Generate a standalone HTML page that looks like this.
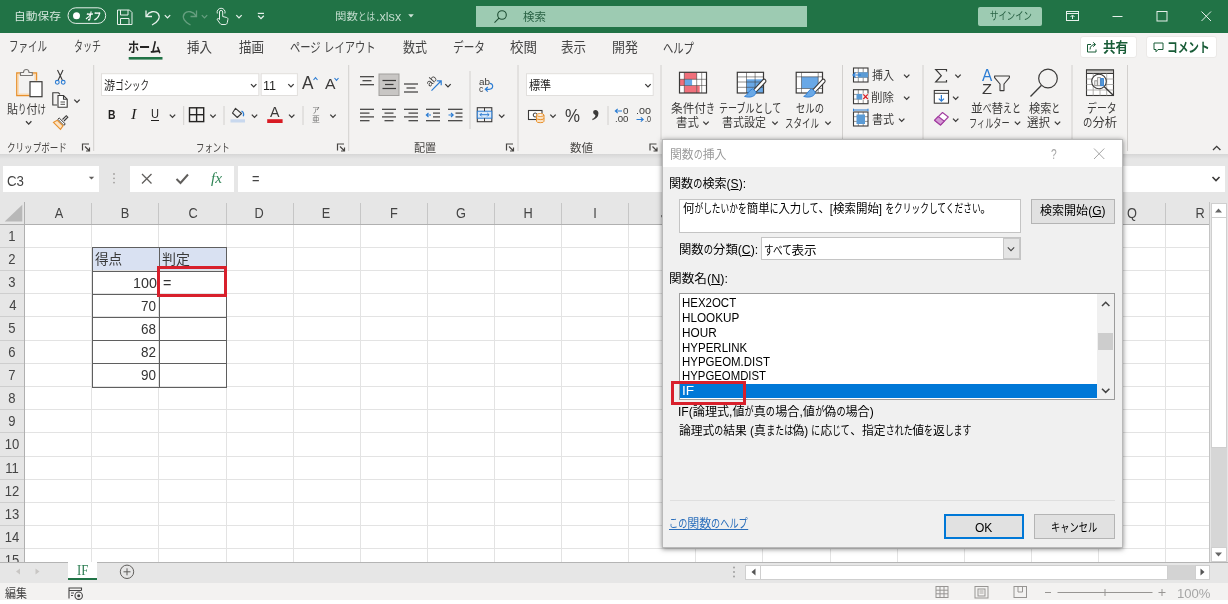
<!DOCTYPE html>
<html lang="ja"><head><meta charset="utf-8"><title>関数とは.xlsx - Excel</title>
<style>
*{box-sizing:border-box;margin:0;padding:0}
html,body{width:1228px;height:604px;overflow:hidden;background:#fff}
body{position:relative;will-change:transform;font-family:"Liberation Sans","Noto Sans CJK JP",sans-serif;color:#262626}
.a{position:absolute}
.t{position:absolute;white-space:nowrap;transform-origin:0 50%;line-height:1}
svg{position:absolute;overflow:visible}
.k{display:inline-block;transform:scaleX(.76);transform-origin:0 50%}
.cj{font-family:"Noto Sans CJK JP","Liberation Sans",sans-serif}
</style></head>
<body>
<div class="a" style="left:0.0px;top:0.0px;width:1228.0px;height:32.5px;background:#217346;"></div>
<div class="a" style="left:0.0px;top:32.5px;width:1228.0px;height:121.0px;background:#f3f2f1;"></div>
<div class="a" style="left:0.0px;top:153.5px;width:1228.0px;height:5.5px;background:linear-gradient(#d6d6d6,#e6e6e6)"></div>
<div class="a" style="left:0.0px;top:159.0px;width:1228.0px;height:42.5px;background:#e6e6e6;"></div>
<div class="a" style="left:2.5px;top:165.5px;width:96.5px;height:26.0px;background:#fff;"></div>
<div class="a" style="left:129.5px;top:165.5px;width:104.5px;height:26.0px;background:#fff;"></div>
<div class="a" style="left:237.5px;top:165.5px;width:987.0px;height:26.0px;background:#fff;"></div>
<div class="a" style="left:476.0px;top:6.0px;width:331.0px;height:21.0px;background:#9dcbb2;"></div>
<div class="a" style="left:977.5px;top:6.5px;width:64.0px;height:19.0px;background:#9dcbb2;border-radius:2px;"></div>
<div class="a" style="left:1079.5px;top:36.0px;width:57.5px;height:22.0px;background:#fff;border:1px solid #ebe9e7;border-radius:3px;"></div>
<div class="a" style="left:1145.5px;top:36.0px;width:71.5px;height:22.0px;background:#fff;border:1px solid #ebe9e7;border-radius:3px;"></div>
<div class="a" style="left:0.0px;top:201.5px;width:1210.0px;height:361.0px;background:#fff;"></div>
<div class="a" style="left:0.0px;top:201.5px;width:1210.0px;height:22.5px;background:#e6e6e6;"></div>
<div class="a" style="left:0.0px;top:201.5px;width:24.6px;height:361.0px;background:#e6e6e6;"></div>
<svg class="a" style="left:0;top:0" width="1228" height="604" shape-rendering="crispEdges">
<line x1="24.6" y1="224.0" x2="24.6" y2="562.5" stroke="#e3e3e3" stroke-width="1"/>
<line x1="24.6" y1="202.5" x2="24.6" y2="224.0" stroke="#c6c6c6" stroke-width="1"/>
<line x1="91.7" y1="224.0" x2="91.7" y2="562.5" stroke="#e3e3e3" stroke-width="1"/>
<line x1="91.7" y1="202.5" x2="91.7" y2="224.0" stroke="#c6c6c6" stroke-width="1"/>
<line x1="158.8" y1="224.0" x2="158.8" y2="562.5" stroke="#e3e3e3" stroke-width="1"/>
<line x1="158.8" y1="202.5" x2="158.8" y2="224.0" stroke="#c6c6c6" stroke-width="1"/>
<line x1="226.0" y1="224.0" x2="226.0" y2="562.5" stroke="#e3e3e3" stroke-width="1"/>
<line x1="226.0" y1="202.5" x2="226.0" y2="224.0" stroke="#c6c6c6" stroke-width="1"/>
<line x1="293.1" y1="224.0" x2="293.1" y2="562.5" stroke="#e3e3e3" stroke-width="1"/>
<line x1="293.1" y1="202.5" x2="293.1" y2="224.0" stroke="#c6c6c6" stroke-width="1"/>
<line x1="360.2" y1="224.0" x2="360.2" y2="562.5" stroke="#e3e3e3" stroke-width="1"/>
<line x1="360.2" y1="202.5" x2="360.2" y2="224.0" stroke="#c6c6c6" stroke-width="1"/>
<line x1="427.3" y1="224.0" x2="427.3" y2="562.5" stroke="#e3e3e3" stroke-width="1"/>
<line x1="427.3" y1="202.5" x2="427.3" y2="224.0" stroke="#c6c6c6" stroke-width="1"/>
<line x1="494.4" y1="224.0" x2="494.4" y2="562.5" stroke="#e3e3e3" stroke-width="1"/>
<line x1="494.4" y1="202.5" x2="494.4" y2="224.0" stroke="#c6c6c6" stroke-width="1"/>
<line x1="561.6" y1="224.0" x2="561.6" y2="562.5" stroke="#e3e3e3" stroke-width="1"/>
<line x1="561.6" y1="202.5" x2="561.6" y2="224.0" stroke="#c6c6c6" stroke-width="1"/>
<line x1="628.7" y1="224.0" x2="628.7" y2="562.5" stroke="#e3e3e3" stroke-width="1"/>
<line x1="628.7" y1="202.5" x2="628.7" y2="224.0" stroke="#c6c6c6" stroke-width="1"/>
<line x1="695.8" y1="224.0" x2="695.8" y2="562.5" stroke="#e3e3e3" stroke-width="1"/>
<line x1="695.8" y1="202.5" x2="695.8" y2="224.0" stroke="#c6c6c6" stroke-width="1"/>
<line x1="762.9" y1="224.0" x2="762.9" y2="562.5" stroke="#e3e3e3" stroke-width="1"/>
<line x1="762.9" y1="202.5" x2="762.9" y2="224.0" stroke="#c6c6c6" stroke-width="1"/>
<line x1="830.0" y1="224.0" x2="830.0" y2="562.5" stroke="#e3e3e3" stroke-width="1"/>
<line x1="830.0" y1="202.5" x2="830.0" y2="224.0" stroke="#c6c6c6" stroke-width="1"/>
<line x1="897.2" y1="224.0" x2="897.2" y2="562.5" stroke="#e3e3e3" stroke-width="1"/>
<line x1="897.2" y1="202.5" x2="897.2" y2="224.0" stroke="#c6c6c6" stroke-width="1"/>
<line x1="964.3" y1="224.0" x2="964.3" y2="562.5" stroke="#e3e3e3" stroke-width="1"/>
<line x1="964.3" y1="202.5" x2="964.3" y2="224.0" stroke="#c6c6c6" stroke-width="1"/>
<line x1="1031.4" y1="224.0" x2="1031.4" y2="562.5" stroke="#e3e3e3" stroke-width="1"/>
<line x1="1031.4" y1="202.5" x2="1031.4" y2="224.0" stroke="#c6c6c6" stroke-width="1"/>
<line x1="1098.5" y1="224.0" x2="1098.5" y2="562.5" stroke="#e3e3e3" stroke-width="1"/>
<line x1="1098.5" y1="202.5" x2="1098.5" y2="224.0" stroke="#c6c6c6" stroke-width="1"/>
<line x1="1165.6" y1="224.0" x2="1165.6" y2="562.5" stroke="#e3e3e3" stroke-width="1"/>
<line x1="1165.6" y1="202.5" x2="1165.6" y2="224.0" stroke="#c6c6c6" stroke-width="1"/>
<line x1="24.6" y1="224.0" x2="1209.5" y2="224.0" stroke="#e3e3e3" stroke-width="1"/>
<line x1="0" y1="224.0" x2="24.6" y2="224.0" stroke="#cecece" stroke-width="1"/>
<line x1="24.6" y1="247.2" x2="1209.5" y2="247.2" stroke="#e3e3e3" stroke-width="1"/>
<line x1="0" y1="247.2" x2="24.6" y2="247.2" stroke="#cecece" stroke-width="1"/>
<line x1="24.6" y1="270.4" x2="1209.5" y2="270.4" stroke="#e3e3e3" stroke-width="1"/>
<line x1="0" y1="270.4" x2="24.6" y2="270.4" stroke="#cecece" stroke-width="1"/>
<line x1="24.6" y1="293.6" x2="1209.5" y2="293.6" stroke="#e3e3e3" stroke-width="1"/>
<line x1="0" y1="293.6" x2="24.6" y2="293.6" stroke="#cecece" stroke-width="1"/>
<line x1="24.6" y1="316.8" x2="1209.5" y2="316.8" stroke="#e3e3e3" stroke-width="1"/>
<line x1="0" y1="316.8" x2="24.6" y2="316.8" stroke="#cecece" stroke-width="1"/>
<line x1="24.6" y1="340.0" x2="1209.5" y2="340.0" stroke="#e3e3e3" stroke-width="1"/>
<line x1="0" y1="340.0" x2="24.6" y2="340.0" stroke="#cecece" stroke-width="1"/>
<line x1="24.6" y1="363.2" x2="1209.5" y2="363.2" stroke="#e3e3e3" stroke-width="1"/>
<line x1="0" y1="363.2" x2="24.6" y2="363.2" stroke="#cecece" stroke-width="1"/>
<line x1="24.6" y1="386.4" x2="1209.5" y2="386.4" stroke="#e3e3e3" stroke-width="1"/>
<line x1="0" y1="386.4" x2="24.6" y2="386.4" stroke="#cecece" stroke-width="1"/>
<line x1="24.6" y1="409.6" x2="1209.5" y2="409.6" stroke="#e3e3e3" stroke-width="1"/>
<line x1="0" y1="409.6" x2="24.6" y2="409.6" stroke="#cecece" stroke-width="1"/>
<line x1="24.6" y1="432.8" x2="1209.5" y2="432.8" stroke="#e3e3e3" stroke-width="1"/>
<line x1="0" y1="432.8" x2="24.6" y2="432.8" stroke="#cecece" stroke-width="1"/>
<line x1="24.6" y1="456.0" x2="1209.5" y2="456.0" stroke="#e3e3e3" stroke-width="1"/>
<line x1="0" y1="456.0" x2="24.6" y2="456.0" stroke="#cecece" stroke-width="1"/>
<line x1="24.6" y1="479.2" x2="1209.5" y2="479.2" stroke="#e3e3e3" stroke-width="1"/>
<line x1="0" y1="479.2" x2="24.6" y2="479.2" stroke="#cecece" stroke-width="1"/>
<line x1="24.6" y1="502.4" x2="1209.5" y2="502.4" stroke="#e3e3e3" stroke-width="1"/>
<line x1="0" y1="502.4" x2="24.6" y2="502.4" stroke="#cecece" stroke-width="1"/>
<line x1="24.6" y1="525.6" x2="1209.5" y2="525.6" stroke="#e3e3e3" stroke-width="1"/>
<line x1="0" y1="525.6" x2="24.6" y2="525.6" stroke="#cecece" stroke-width="1"/>
<line x1="24.6" y1="548.8" x2="1209.5" y2="548.8" stroke="#e3e3e3" stroke-width="1"/>
<line x1="0" y1="548.8" x2="24.6" y2="548.8" stroke="#cecece" stroke-width="1"/>
<line x1="0" y1="224.0" x2="1209.5" y2="224.0" stroke="#b0b0b0" stroke-width="1"/>
<line x1="24.6" y1="201.5" x2="24.6" y2="562.5" stroke="#b0b0b0" stroke-width="1"/>
<line x1="1209.5" y1="201.5" x2="1209.5" y2="562" stroke="#c4c4c4" stroke-width="1"/>
<polygon points="22.3,204.8 22.3,221.5 4.7,221.5" fill="#b8b8b8" shape-rendering="auto"/>
</svg>
<div class="a" style="left:91.7px;top:247.2px;width:134.2px;height:23.2px;background:#d9e1f2;"></div>
<svg class="a" style="left:0;top:0" width="1228" height="604" shape-rendering="crispEdges">
<line x1="92.4" y1="247.9" x2="226.7" y2="247.9" stroke="#5f5f5f" stroke-width="1"/>
<line x1="92.4" y1="271.1" x2="226.7" y2="271.1" stroke="#5f5f5f" stroke-width="1"/>
<line x1="92.4" y1="294.3" x2="226.7" y2="294.3" stroke="#5f5f5f" stroke-width="1"/>
<line x1="92.4" y1="317.5" x2="226.7" y2="317.5" stroke="#5f5f5f" stroke-width="1"/>
<line x1="92.4" y1="340.7" x2="226.7" y2="340.7" stroke="#5f5f5f" stroke-width="1"/>
<line x1="92.4" y1="363.9" x2="226.7" y2="363.9" stroke="#5f5f5f" stroke-width="1"/>
<line x1="92.4" y1="387.1" x2="226.7" y2="387.1" stroke="#5f5f5f" stroke-width="1"/>
<line x1="92.4" y1="247.9" x2="92.4" y2="387.1" stroke="#5f5f5f" stroke-width="1"/>
<line x1="159.5" y1="247.9" x2="159.5" y2="387.1" stroke="#5f5f5f" stroke-width="1"/>
<line x1="226.7" y1="247.9" x2="226.7" y2="387.1" stroke="#5f5f5f" stroke-width="1"/>
</svg>
<div class="a" style="left:157.0px;top:266.0px;width:70.0px;height:31.0px;border:3px solid #d8202c;"></div>
<svg style="left:0;top:0" width="1228" height="604" viewBox="0 0 1228 604">
<rect x="68" y="7.8" width="37.7" height="15.6" rx="7.8" fill="none" stroke="#e6f0ea" stroke-width="1"/>
<circle cx="76.5" cy="15.7" r="3.5" fill="#fff"/>
<path d="M117.5,10 H129.5 L132,12.5 V24.5 H117.5 Z M120.5,10 V15 H128 V10 M120.5,24.5 V18.5 H129 V24.5" fill="none" stroke="#e6f0ea" stroke-width="1"/>
<path d="M146,10.5 V16.5 H152 M146.5,16 C149,11.5 155,10 158,13.5 C161,17.5 158,22 152,25" fill="none" stroke="#e6f0ea" stroke-width="1.3"/>
<polyline points="164.8,15.1 167.5,17.9 170.2,15.1" fill="none" stroke="#e6f0ea" stroke-width="1.3"/>
<g opacity=".35"><path d="M196.5,10.5 V16.5 H190.5 M196,16 C193.5,11.5 187.5,10 184.5,13.5 C181.5,17.5 184.5,22 190.5,25" fill="none" stroke="#e6f0ea" stroke-width="1.3"/><polyline points="201.8,15.1 204.5,17.9 207.2,15.1" fill="none" stroke="#e6f0ea" stroke-width="1.3"/></g>
<path d="M219.5,18 V12 a1.6,1.6 0 0 1 3.2,0 V16.5 l4,1 c1,.3 1.3,1 1.2,2 l-.6,3 c-.3,1.5 -1,2 -2.3,2 h-3 c-1,0 -1.6,-.4 -2.2,-1.3 l-2.8,-4 c1,-1 2,-.6 2.5,.3 z" fill="none" stroke="#e6f0ea" stroke-width="1"/>
<path d="M217.3,13.5 a4,4 0 1 1 7.6,0" fill="none" stroke="#e6f0ea" stroke-width="1"/>
<polyline points="236.3,15.1 239.0,17.9 241.7,15.1" fill="none" stroke="#e6f0ea" stroke-width="1.3"/>
<line x1="257.8" y1="13.4" x2="264" y2="13.4" stroke="#e6f0ea" stroke-width="1.2"/>
<polyline points="258.2,15.8 261.0,18.6 263.8,15.8" fill="none" stroke="#e6f0ea" stroke-width="1.3"/>
<polygon points="408.2,14.3 413.8,14.3 411,17.6" fill="#cfe3d8"/>
<circle cx="502" cy="15" r="4.3" fill="none" stroke="#1e4d33" stroke-width="1.1"/><line x1="499" y1="18.2" x2="494.5" y2="22.7" stroke="#1e4d33" stroke-width="1.1"/>
<rect x="1066.5" y="11.5" width="12" height="9" fill="none" stroke="#e6f0ea" stroke-width="1"/><line x1="1066.5" y1="13.5" x2="1078.5" y2="13.5" stroke="#e6f0ea"/><path d="M1072.5,19 V15.5 M1070.5,17 L1072.5,15 L1074.5,17" fill="none" stroke="#e6f0ea" stroke-width="1"/>
<line x1="1112.5" y1="16.5" x2="1122.5" y2="16.5" stroke="#e6f0ea" stroke-width="1"/>
<rect x="1157" y="11.5" width="10" height="9.5" fill="none" stroke="#e6f0ea" stroke-width="1"/>
<path d="M1201.5,11.5 L1211,21 M1211,11.5 L1201.5,21" stroke="#e6f0ea" stroke-width="1" fill="none"/>
<rect x="128.7" y="57" width="33.8" height="2.6" fill="#217346"/>
<path d="M1091,44.5 H1087.5 V52 H1096 V49.5 M1090,49.5 C1090,46 1092.5,44.5 1095,44.5 M1093.2,42.3 L1095.6,44.5 L1093.2,46.7" fill="none" stroke="#185c37" stroke-width="1"/>
<path d="M1154,43 H1163 V49.5 H1158 L1156,51.8 V49.5 H1154 Z" fill="none" stroke="#185c37" stroke-width="1"/>
<polyline points="1213,150 1216.7,146.3 1220.4,150" fill="none" stroke="#3b3a39" stroke-width="1.3"/>
<path d="M21,73 H16.8 V95.5 H29.5 M32,73 H36.5 V80.5" fill="none" stroke="#e8912d" stroke-width="1.4"/>
<path d="M20.5,74.4 H18.2 V94.1 H29.3 M32.5,74.4 H35.1 V80.5" fill="none" stroke="#fbd9b0" stroke-width="1.3"/>
<path d="M20.5,75.5 V72.5 H23.5 C23.5,68.5 29,68.5 29,72.5 H32.3 V75.5 Z" fill="#f3f2f1" stroke="#797775" stroke-width="1.1"/>
<rect x="30" y="81.7" width="12" height="15" fill="#fff" stroke="#3b3a39" stroke-width="1.2"/>
<polyline points="26.0,121.3 28.7,124.1 31.4,121.3" fill="none" stroke="#3b3a39" stroke-width="1.3"/>
<path d="M57.5,70 L62.3,80 M63,70 L58.2,80" stroke="#3b3a39" stroke-width="1.1" fill="none"/>
<circle cx="57.3" cy="82.3" r="1.9" fill="none" stroke="#2b7cd3" stroke-width="1.1"/><circle cx="63.2" cy="82.3" r="1.9" fill="none" stroke="#2b7cd3" stroke-width="1.1"/>
<path d="M57,105 H52.8 V92.8 H58.5 L60,94.3" fill="none" stroke="#3b3a39" stroke-width="1.1"/>
<path d="M58,95.5 H63.5 L67.2,99.2 V107.3 H58 Z M63.5,95.5 V99.2 H67.2" fill="#fff" stroke="#3b3a39" stroke-width="1.1"/>
<line x1="60.5" y1="102" x2="65" y2="102" stroke="#3b3a39" stroke-width="0.9"/>
<line x1="60.5" y1="104.3" x2="65" y2="104.3" stroke="#3b3a39" stroke-width="0.9"/>
<polyline points="74.3,99.6 77.0,102.4 79.7,99.6" fill="none" stroke="#3b3a39" stroke-width="1.3"/>
<path d="M62.5,119.5 L66.3,115.7 L67.8,117.2 L64,121" fill="none" stroke="#3b3a39" stroke-width="1.1"/>
<path d="M59.2,118 L65.3,124 L63.8,125.3 L57.8,119.3 Z" fill="#fff" stroke="#3b3a39" stroke-width="1"/>
<path d="M57.3,120.3 L53.5,122.3 L60.5,129.3 L63,125.8 Z" fill="#fbe3c5" stroke="#e8912d" stroke-width="1.1"/>
<path d="M82.5,150.5 V144 H89.0" fill="none" stroke="#484644" stroke-width="1.2"/><path d="M85.0,146.5 L89.5,151 M89.5,147.5 V151 H86.0" fill="none" stroke="#484644" stroke-width="1.2"/>
<line x1="93.7" y1="65" x2="93.7" y2="151" stroke="#d2d0ce" stroke-width="1"/>
<rect x="101.5" y="73.7" width="157.3" height="21.8" fill="#fff" stroke="#e1dfdd" stroke-width="1"/>
<rect x="261.2" y="73.7" width="36.2" height="21.8" fill="#fff" stroke="#e1dfdd" stroke-width="1"/>
<polyline points="251.0,84.1 253.7,86.9 256.4,84.1" fill="none" stroke="#3b3a39" stroke-width="1.3"/>
<polyline points="288.3,84.1 291.0,86.9 293.7,84.1" fill="none" stroke="#3b3a39" stroke-width="1.3"/>
<polyline points="313.5,80 315.5,77.7 317.5,80" fill="none" stroke="#2b7cd3" stroke-width="1.1"/>
<polyline points="334.5,78 336.5,80.3 338.5,78" fill="none" stroke="#2b7cd3" stroke-width="1.1"/>
<polyline points="169.8,114.6 172.5,117.4 175.2,114.6" fill="none" stroke="#3b3a39" stroke-width="1.3"/>
<line x1="183.7" y1="106" x2="183.7" y2="125" stroke="#d2d0ce" stroke-width="1"/>
<rect x="189.5" y="107.8" width="14.2" height="13.8" fill="none" stroke="#252423" stroke-width="1.4"/><line x1="196.6" y1="107.8" x2="196.6" y2="121.6" stroke="#252423" stroke-width="1.4"/><line x1="189.5" y1="114.7" x2="203.7" y2="114.7" stroke="#252423" stroke-width="1.4"/>
<polyline points="210.3,114.6 213.0,117.4 215.7,114.6" fill="none" stroke="#3b3a39" stroke-width="1.3"/>
<line x1="224" y1="106" x2="224" y2="125" stroke="#d2d0ce" stroke-width="1"/>
<path d="M235.5,108.3 L241.5,113.5 L237.3,117.5 L232.5,113 Z" fill="none" stroke="#3b3a39" stroke-width="1.1" stroke-linejoin="round"/>
<path d="M241.5,111 C243.5,112 244,114 243.3,116.3" fill="none" stroke="#2b7cd3" stroke-width="1.3"/>
<rect x="230.5" y="119.3" width="14.5" height="3.2" fill="#c8d8ee"/>
<polyline points="251.8,114.6 254.5,117.4 257.2,114.6" fill="none" stroke="#3b3a39" stroke-width="1.3"/>
<rect x="267.2" y="119.2" width="15.4" height="3.8" fill="#d81b23"/>
<polyline points="289.0,114.6 291.7,117.4 294.4,114.6" fill="none" stroke="#3b3a39" stroke-width="1.3"/>
<line x1="303" y1="106" x2="303" y2="125" stroke="#d2d0ce" stroke-width="1"/>
<polyline points="330.3,114.6 333.0,117.4 335.7,114.6" fill="none" stroke="#3b3a39" stroke-width="1.3"/>
<path d="M337.5,150.5 V144 H344.0" fill="none" stroke="#484644" stroke-width="1.2"/><path d="M340.0,146.5 L344.5,151 M344.5,147.5 V151 H341.0" fill="none" stroke="#484644" stroke-width="1.2"/>
<line x1="348.7" y1="65" x2="348.7" y2="151" stroke="#d2d0ce" stroke-width="1"/>
<line x1="360" y1="76.7" x2="374" y2="76.7" stroke="#3b3a39" stroke-width="1.2"/><line x1="362.5" y1="80.7" x2="371.5" y2="80.7" stroke="#3b3a39" stroke-width="1.2"/><line x1="360" y1="84.7" x2="374" y2="84.7" stroke="#3b3a39" stroke-width="1.2"/>
<rect x="379" y="74" width="20" height="21.5" fill="#c8c6c4" stroke="#a19f9d" stroke-width="1"/>
<line x1="382.5" y1="80.5" x2="396" y2="80.5" stroke="#3b3a39" stroke-width="1.2"/><line x1="385" y1="84.5" x2="393.5" y2="84.5" stroke="#3b3a39" stroke-width="1.2"/><line x1="382.5" y1="88.5" x2="396" y2="88.5" stroke="#3b3a39" stroke-width="1.2"/>
<line x1="404" y1="84" x2="418" y2="84" stroke="#3b3a39" stroke-width="1.2"/><line x1="406.5" y1="88" x2="415.5" y2="88" stroke="#3b3a39" stroke-width="1.2"/><line x1="404" y1="92" x2="418" y2="92" stroke="#3b3a39" stroke-width="1.2"/>
<path d="M431.5,90.7 L441,81 M436.8,80.8 H441.2 V85.2" fill="none" stroke="#2b7cd3" stroke-width="1.2"/>
<polyline points="445.3,84.1 448.0,86.9 450.7,84.1" fill="none" stroke="#3b3a39" stroke-width="1.3"/>
<line x1="470" y1="71" x2="470" y2="129" stroke="#d2d0ce" stroke-width="1"/>
<path d="M489.5,83.3 C493.8,83.3 493.8,89.3 489,89.3 H485.5 M487.8,87 L485.3,89.3 L487.8,91.6" fill="none" stroke="#2b7cd3" stroke-width="1.2"/>
<line x1="360" y1="109.3" x2="374" y2="109.3" stroke="#3b3a39" stroke-width="1.2"/><line x1="360" y1="113.1" x2="369.5" y2="113.1" stroke="#3b3a39" stroke-width="1.2"/><line x1="360" y1="116.9" x2="374" y2="116.9" stroke="#3b3a39" stroke-width="1.2"/><line x1="360" y1="120.7" x2="369.5" y2="120.7" stroke="#3b3a39" stroke-width="1.2"/>
<line x1="382" y1="109.3" x2="396" y2="109.3" stroke="#3b3a39" stroke-width="1.2"/><line x1="384.5" y1="113.1" x2="393.5" y2="113.1" stroke="#3b3a39" stroke-width="1.2"/><line x1="382" y1="116.9" x2="396" y2="116.9" stroke="#3b3a39" stroke-width="1.2"/><line x1="384.5" y1="120.7" x2="393.5" y2="120.7" stroke="#3b3a39" stroke-width="1.2"/>
<line x1="404" y1="109.3" x2="418" y2="109.3" stroke="#3b3a39" stroke-width="1.2"/><line x1="408.5" y1="113.1" x2="418" y2="113.1" stroke="#3b3a39" stroke-width="1.2"/><line x1="404" y1="116.9" x2="418" y2="116.9" stroke="#3b3a39" stroke-width="1.2"/><line x1="408.5" y1="120.7" x2="418" y2="120.7" stroke="#3b3a39" stroke-width="1.2"/>
<line x1="426" y1="109.3" x2="440" y2="109.3" stroke="#3b3a39" stroke-width="1.2"/><line x1="433" y1="113.1" x2="440" y2="113.1" stroke="#3b3a39" stroke-width="1.2"/><line x1="433" y1="116.9" x2="440" y2="116.9" stroke="#3b3a39" stroke-width="1.2"/><line x1="426" y1="120.7" x2="440" y2="120.7" stroke="#3b3a39" stroke-width="1.2"/>
<path d="M431,115 H426.5 M428.5,113 L426.3,115 L428.5,117" fill="none" stroke="#2b7cd3" stroke-width="1.1"/>
<line x1="448" y1="109.3" x2="462.5" y2="109.3" stroke="#3b3a39" stroke-width="1.2"/><line x1="455.5" y1="113.1" x2="462.5" y2="113.1" stroke="#3b3a39" stroke-width="1.2"/><line x1="455.5" y1="116.9" x2="462.5" y2="116.9" stroke="#3b3a39" stroke-width="1.2"/><line x1="448" y1="120.7" x2="462.5" y2="120.7" stroke="#3b3a39" stroke-width="1.2"/>
<path d="M448.5,115 H453 M451,113 L453.2,115 L451,117" fill="none" stroke="#2b7cd3" stroke-width="1.1"/>
<rect x="477.3" y="107.7" width="14.5" height="14" fill="none" stroke="#3b3a39" stroke-width="1.1"/>
<rect x="477.3" y="111.2" width="14.5" height="7" fill="#dbe9f8" stroke="#2b7cd3" stroke-width="1"/>
<path d="M480,114.7 H489 M481.7,113 L480,114.7 L481.7,116.4 M487.3,113 L489,114.7 L487.3,116.4" fill="none" stroke="#2b7cd3" stroke-width="1"/>
<line x1="484.5" y1="107.7" x2="484.5" y2="111.2" stroke="#3b3a39"/><line x1="484.5" y1="118.2" x2="484.5" y2="121.7" stroke="#3b3a39"/>
<polyline points="499.0,114.6 501.7,117.4 504.4,114.6" fill="none" stroke="#3b3a39" stroke-width="1.3"/>
<path d="M506.5,150.5 V144 H513.0" fill="none" stroke="#484644" stroke-width="1.2"/><path d="M509.0,146.5 L513.5,151 M513.5,147.5 V151 H510.0" fill="none" stroke="#484644" stroke-width="1.2"/>
<line x1="518" y1="65" x2="518" y2="151" stroke="#d2d0ce" stroke-width="1"/>
<rect x="526.5" y="73.7" width="126.7" height="21.8" fill="#fff" stroke="#e1dfdd" stroke-width="1"/>
<polyline points="645.3,84.1 648.0,86.9 650.7,84.1" fill="none" stroke="#3b3a39" stroke-width="1.3"/>
<rect x="528.5" y="110.5" width="13.5" height="9" fill="#fff" stroke="#3b3a39" stroke-width="1.1"/><circle cx="535.2" cy="115" r="2" fill="none" stroke="#3b3a39" stroke-width="1"/>
<path d="M536.5,115 h7.5 v6.3 a3.75,1.4 0 0 1 -7.5,0 z" fill="#fbe3c5" stroke="#e8912d" stroke-width="1"/><ellipse cx="540.25" cy="115" rx="3.75" ry="1.4" fill="#fff" stroke="#e8912d" stroke-width="1"/><path d="M536.5,118.2 a3.75,1.4 0 0 0 7.5,0" fill="none" stroke="#e8912d" stroke-width="1"/>
<polyline points="550.3,114.6 553.0,117.4 555.7,114.6" fill="none" stroke="#3b3a39" stroke-width="1.3"/>
<line x1="608" y1="106" x2="608" y2="125" stroke="#d2d0ce" stroke-width="1"/>
<path d="M622,111 H615.5 M617.7,108.8 L615.3,111 L617.7,113.2" fill="none" stroke="#2b7cd3" stroke-width="1.1"/>
<path d="M636.5,119.5 H643 M640.8,117.3 L643.2,119.5 L640.8,121.7" fill="none" stroke="#2b7cd3" stroke-width="1.1"/>
<path d="M650,150.5 V144 H656.5" fill="none" stroke="#484644" stroke-width="1.2"/><path d="M652.5,146.5 L657,151 M657,147.5 V151 H653.5" fill="none" stroke="#484644" stroke-width="1.2"/>
<line x1="661" y1="65" x2="661" y2="140" stroke="#d2d0ce" stroke-width="1"/>
<rect x="679.5" y="72.3" width="27" height="20.7" fill="#fff"/>
<rect x="684.3" y="72.3" width="12.4" height="20.7" fill="#f1707b"/>
<rect x="679.5" y="79.3" width="27" height="6.3" fill="#fff"/>
<rect x="679.5" y="79.3" width="5.3" height="6.3" fill="#f1707b"/><rect x="684.8" y="79.3" width="7.3" height="6.3" fill="#69a8e6"/>
<rect x="696.7" y="85.6" width="3" height="7.4" fill="#f1707b"/>
<line x1="684.3" y1="72.3" x2="684.3" y2="93.0" stroke="#3b3a39" stroke-width=".8" opacity=".7"/>
<line x1="696.7" y1="72.3" x2="696.7" y2="93.0" stroke="#3b3a39" stroke-width=".8" opacity=".7"/>
<line x1="701.7" y1="72.3" x2="701.7" y2="93.0" stroke="#3b3a39" stroke-width=".8" opacity=".7"/>
<line x1="679.5" y1="79.3" x2="706.5" y2="79.3" stroke="#3b3a39" stroke-width=".8" opacity=".7"/>
<line x1="679.5" y1="85.6" x2="706.5" y2="85.6" stroke="#3b3a39" stroke-width=".8" opacity=".7"/>
<rect x="679.5" y="72.3" width="27" height="20.7" fill="none" stroke="#3b3a39" stroke-width="1.2"/>
<polyline points="703.3,121.6 706.0,124.4 708.7,121.6" fill="none" stroke="#3b3a39" stroke-width="1.3"/>
<rect x="737.3" y="72.3" width="26.2" height="20.7" fill="#fff"/>
<rect x="746.5" y="79.3" width="17" height="13.7" fill="#69a8e6"/>
<line x1="746.5" y1="72.3" x2="746.5" y2="93.0" stroke="#3b3a39" stroke-width=".8" opacity=".7"/>
<line x1="755.0999999999999" y1="72.3" x2="755.0999999999999" y2="93.0" stroke="#3b3a39" stroke-width=".8" opacity=".7"/>
<line x1="737.3" y1="76.89999999999999" x2="763.5" y2="76.89999999999999" stroke="#3b3a39" stroke-width=".8" opacity=".7"/>
<line x1="737.3" y1="82.0" x2="763.5" y2="82.0" stroke="#3b3a39" stroke-width=".8" opacity=".7"/>
<line x1="737.3" y1="87.3" x2="763.5" y2="87.3" stroke="#3b3a39" stroke-width=".8" opacity=".7"/>
<rect x="737.3" y="72.3" width="26.2" height="20.7" fill="none" stroke="#3b3a39" stroke-width="1.2"/>
<path d="M764.8,79.3 C766.1,80.3 766.3,81.3 765.3,82.5 L755.8,92.3 L753.3,90.2 L762.8,79.8 C763.5,79 764.2,78.9 764.8,79.3 Z" fill="#fff" stroke="#3b3a39" stroke-width="1.1"/><path d="M756.1,91.8 C756.1,96 750.5,98.4 744.5,96.4 C748.1,95.4 747.9,90.8 752.5,88.8 Z" fill="#69a8e6" stroke="#2b7cd3" stroke-width=".9"/>
<polyline points="772.3,121.6 775.0,124.4 777.7,121.6" fill="none" stroke="#3b3a39" stroke-width="1.3"/>
<rect x="796.2" y="72.3" width="26.3" height="20.7" fill="#fff"/>
<rect x="801.4000000000001" y="76.8" width="16.8" height="11.7" fill="#69a8e6"/>
<line x1="801.4000000000001" y1="72.3" x2="801.4000000000001" y2="93.0" stroke="#3b3a39" stroke-width=".8" opacity=".7"/>
<line x1="818.2" y1="72.3" x2="818.2" y2="93.0" stroke="#3b3a39" stroke-width=".8" opacity=".7"/>
<line x1="796.2" y1="76.8" x2="822.5" y2="76.8" stroke="#3b3a39" stroke-width=".8" opacity=".7"/>
<line x1="796.2" y1="88.5" x2="822.5" y2="88.5" stroke="#3b3a39" stroke-width=".8" opacity=".7"/>
<rect x="796.2" y="72.3" width="26.3" height="20.7" fill="none" stroke="#3b3a39" stroke-width="1.2"/>
<path d="M824.0,79.3 C825.3000000000001,80.3 825.5,81.3 824.5,82.5 L815.0,92.3 L812.5,90.2 L822.0,79.8 C822.7,79 823.4000000000001,78.9 824.0,79.3 Z" fill="#fff" stroke="#3b3a39" stroke-width="1.1"/><path d="M815.3000000000001,91.8 C815.3000000000001,96 809.7,98.4 803.7,96.4 C807.3000000000001,95.4 807.1,90.8 811.7,88.8 Z" fill="#69a8e6" stroke="#2b7cd3" stroke-width=".9"/>
<polyline points="825.3,121.6 828.0,124.4 830.7,121.6" fill="none" stroke="#3b3a39" stroke-width="1.3"/>
<line x1="842.5" y1="65" x2="842.5" y2="140" stroke="#d2d0ce" stroke-width="1"/>
<rect x="853.5" y="68" width="14.5" height="14" fill="#fff" stroke="#3b3a39" stroke-width="1.1"/><g opacity=".6"><line x1="858.3" y1="68" x2="858.3" y2="82" stroke="#3b3a39" stroke-width=".9"/><line x1="863.2" y1="68" x2="863.2" y2="82" stroke="#3b3a39" stroke-width=".9"/><line x1="853.5" y1="72.7" x2="868.0" y2="72.7" stroke="#3b3a39" stroke-width=".9"/><line x1="853.5" y1="77.4" x2="868.0" y2="77.4" stroke="#3b3a39" stroke-width=".9"/></g>
<rect x="858" y="72.3" width="10" height="5.2" fill="#5b9bd5"/><path d="M861,75 H853 M855.5,72.5 L853,75 L855.5,77.5" fill="none" stroke="#2b7cd3" stroke-width="1.2"/>
<polyline points="904.0,74.6 906.7,77.4 909.4,74.6" fill="none" stroke="#3b3a39" stroke-width="1.3"/>
<rect x="853.5" y="89.7" width="14.5" height="14" fill="#fff" stroke="#3b3a39" stroke-width="1.1"/><g opacity=".6"><line x1="858.3" y1="89.7" x2="858.3" y2="103.7" stroke="#3b3a39" stroke-width=".9"/><line x1="863.2" y1="89.7" x2="863.2" y2="103.7" stroke="#3b3a39" stroke-width=".9"/><line x1="853.5" y1="94.4" x2="868.0" y2="94.4" stroke="#3b3a39" stroke-width=".9"/><line x1="853.5" y1="99.10000000000001" x2="868.0" y2="99.10000000000001" stroke="#3b3a39" stroke-width=".9"/></g>
<rect x="856.5" y="94" width="6" height="5.4" fill="#5b9bd5"/><rect x="862.3" y="93.5" width="6.5" height="6.5" fill="#f3f2f1"/><path d="M863.3,94.3 L867.8,99 M867.8,94.3 L863.3,99" stroke="#d81b23" stroke-width="1.2"/>
<polyline points="904.0,96.6 906.7,99.4 909.4,96.6" fill="none" stroke="#3b3a39" stroke-width="1.3"/>
<rect x="853.5" y="112" width="14.5" height="14" fill="#fff" stroke="#3b3a39" stroke-width="1.1"/><g opacity=".6"><line x1="858.3" y1="112" x2="858.3" y2="126" stroke="#3b3a39" stroke-width=".9"/><line x1="863.2" y1="112" x2="863.2" y2="126" stroke="#3b3a39" stroke-width=".9"/><line x1="853.5" y1="116.7" x2="868.0" y2="116.7" stroke="#3b3a39" stroke-width=".9"/><line x1="853.5" y1="121.4" x2="868.0" y2="121.4" stroke="#3b3a39" stroke-width=".9"/></g>
<rect x="856.5" y="114.5" width="8.5" height="9.5" fill="#5b9bd5"/><path d="M853.5,110 H868 M853.5,108.7 V111.3 M868,108.7 V111.3" stroke="#2b7cd3" stroke-width="1" fill="none"/>
<polyline points="899.0,118.6 901.7,121.4 904.4,118.6" fill="none" stroke="#3b3a39" stroke-width="1.3"/>
<line x1="923" y1="65" x2="923" y2="140" stroke="#d2d0ce" stroke-width="1"/>
<path d="M946.5,71.5 V69.5 H935.7 L941.3,75.7 L935.7,82 H946.5 V80" fill="none" stroke="#3b3a39" stroke-width="1.2"/>
<polyline points="955.3,74.6 958.0,77.4 960.7,74.6" fill="none" stroke="#3b3a39" stroke-width="1.3"/>
<rect x="934.3" y="90.5" width="14.2" height="12.7" fill="#fff" stroke="#3b3a39" stroke-width="1.1"/><line x1="934.3" y1="93.3" x2="948.5" y2="93.3" stroke="#3b3a39" stroke-width="1"/>
<path d="M941.4,95 V101 M938.8,98.6 L941.4,101.2 L944,98.6" fill="none" stroke="#2b7cd3" stroke-width="1.2"/>
<polyline points="953.0,96.6 955.7,99.4 958.4,96.6" fill="none" stroke="#3b3a39" stroke-width="1.3"/>
<path d="M942.5,112.5 L948.3,117 L940.5,125 L934.5,120.3 Z" fill="#fff" stroke="#a33ea1" stroke-width="1.1" stroke-linejoin="round"/><path d="M938.3,116.5 L944.3,121.2 L940.5,125 L934.5,120.3 Z" fill="#d59ad4" stroke="#a33ea1" stroke-width="1.1" stroke-linejoin="round"/>
<polyline points="953.0,118.6 955.7,121.4 958.4,118.6" fill="none" stroke="#3b3a39" stroke-width="1.3"/>
<path d="M994.6,76 H1009.4 V77.6 L1004,84 V90.6 H1000 V84 L994.6,77.6 Z" fill="none" stroke="#3b3a39" stroke-width="1.1" stroke-linejoin="round"/>
<polyline points="1014.8,121.6 1017.5,124.4 1020.2,121.6" fill="none" stroke="#3b3a39" stroke-width="1.3"/>
<circle cx="1048" cy="78.5" r="9.3" fill="none" stroke="#3b3a39" stroke-width="1.2"/><line x1="1041.3" y1="85.5" x2="1030.5" y2="96.5" stroke="#3b3a39" stroke-width="1.3"/>
<polyline points="1054.8,121.6 1057.5,124.4 1060.2,121.6" fill="none" stroke="#3b3a39" stroke-width="1.3"/>
<line x1="1072" y1="65" x2="1072" y2="140" stroke="#d2d0ce" stroke-width="1"/>
<rect x="1086.5" y="70" width="27" height="25.5" fill="#fff" stroke="#3b3a39" stroke-width="1.1"/><rect x="1086.5" y="70" width="27" height="3.5" fill="#c8c6c4" stroke="#3b3a39" stroke-width="1"/>
<line x1="1093.2" y1="73.5" x2="1093.2" y2="95.5" stroke="#a19f9d" stroke-width=".8"/>
<line x1="1100.0" y1="73.5" x2="1100.0" y2="95.5" stroke="#a19f9d" stroke-width=".8"/>
<line x1="1106.7" y1="73.5" x2="1106.7" y2="95.5" stroke="#a19f9d" stroke-width=".8"/>
<line x1="1086.5" y1="79" x2="1113.5" y2="79" stroke="#a19f9d" stroke-width=".8"/>
<line x1="1086.5" y1="84.5" x2="1113.5" y2="84.5" stroke="#a19f9d" stroke-width=".8"/>
<line x1="1086.5" y1="90" x2="1113.5" y2="90" stroke="#a19f9d" stroke-width=".8"/>
<circle cx="1099" cy="81.5" r="7.3" fill="#fff" stroke="#3b3a39" stroke-width="1.1"/><line x1="1104.3" y1="86.8" x2="1113" y2="95" stroke="#3b3a39" stroke-width="1.4"/>
<rect x="1094.8" y="80.8" width="2.4" height="4.9" fill="#fff" stroke="#8a8886" stroke-width=".9"/><rect x="1097.7" y="77.6" width="2.6" height="8.1" fill="#fff" stroke="#8a8886" stroke-width=".9"/><rect x="1100.8" y="78.6" width="2.6" height="7.1" fill="#5b9bd5" stroke="#2b7cd3" stroke-width=".9"/>
<line x1="1127.5" y1="65" x2="1127.5" y2="151" stroke="#d2d0ce" stroke-width="1"/>
<polygon points="88.8,176.7 94.2,176.7 91.5,179.6" fill="#605e5c"/>
<circle cx="114" cy="174" r=".9" fill="#a19f9d"/>
<circle cx="114" cy="178.3" r=".9" fill="#a19f9d"/>
<circle cx="114" cy="182.6" r=".9" fill="#a19f9d"/>
<path d="M142,174 L151.5,183.5 M151.5,174 L142,183.5" stroke="#605e5c" stroke-width="1.3" fill="none"/>
<path d="M176.5,179 L180.5,183 L188,174.5" stroke="#605e5c" stroke-width="2" fill="none"/>
<polyline points="1212.5,177 1216,180.5 1219.5,177" fill="none" stroke="#3b3a39" stroke-width="1.6"/>
</svg>
<span class="t" style="top:10.75px;font-size:10.5px;height:10.5px;line-height:10.5px;color:#d5e7dd;left:14.00px;transform:scaleX(1.1163);">自動保存</span>
<span class="t" style="top:10.95px;font-size:10.5px;height:10.5px;line-height:10.5px;color:#fff;left:85.00px;font-weight:700;font-style:italic;transform:scaleX(0.9374);"><span class="k" style="margin-right:-0.48em">オフ</span></span>
<span class="t" style="top:11.15px;font-size:10.5px;height:10.5px;line-height:10.5px;color:#c2dccd;left:335.00px;transform:scaleX(1.0902);">関数<span class="k" style="margin-right:-0.48em">とは</span></span>
<span class="t" style="top:11.45px;font-size:12.5px;height:12.5px;line-height:12.5px;color:#c2dccd;left:376.20px;transform:scaleX(1.0068);">.xlsx</span>
<span class="t" style="top:12.20px;font-size:11px;height:11px;line-height:11px;color:#2a6345;left:523.00px;transform:scaleX(1.0442);">検索</span>
<span class="t" style="top:10.50px;font-size:11px;height:11px;line-height:11px;color:#2a6345;left:990.00px;transform:scaleX(1.0026);"><span class="k" style="margin-right:-1.20em">サインイン</span></span>
<span class="t" style="top:40.45px;font-size:13.5px;height:13.5px;line-height:13.5px;color:#444;left:9.00px;transform:scaleX(0.9237);"><span class="k" style="margin-right:-0.96em">ファイル</span></span>
<span class="t" style="top:40.45px;font-size:13.5px;height:13.5px;line-height:13.5px;color:#444;left:74.00px;transform:scaleX(0.8778);"><span class="k" style="margin-right:-0.72em">タッチ</span></span>
<span class="t" style="top:41.45px;font-size:13.5px;height:13.5px;line-height:13.5px;color:#444;left:187.00px;transform:scaleX(0.9248);">挿入</span>
<span class="t" style="top:41.45px;font-size:13.5px;height:13.5px;line-height:13.5px;color:#444;left:239.00px;transform:scaleX(0.9259);">描画</span>
<span class="t" style="top:40.95px;font-size:13.5px;height:13.5px;line-height:13.5px;color:#444;left:290.00px;transform:scaleX(1.0029);"><span class="k" style="margin-right:-0.72em">ページ</span> <span class="k" style="margin-right:-1.20em">レイアウト</span></span>
<span class="t" style="top:41.45px;font-size:13.5px;height:13.5px;line-height:13.5px;color:#444;left:403.00px;transform:scaleX(0.8889);">数式</span>
<span class="t" style="top:41.45px;font-size:13.5px;height:13.5px;line-height:13.5px;color:#444;left:453.00px;transform:scaleX(1.0373);"><span class="k" style="margin-right:-0.72em">データ</span></span>
<span class="t" style="top:41.45px;font-size:13.5px;height:13.5px;line-height:13.5px;color:#444;left:510.00px;transform:scaleX(0.9988);">校閲</span>
<span class="t" style="top:41.45px;font-size:13.5px;height:13.5px;line-height:13.5px;color:#444;left:561.00px;transform:scaleX(0.9259);">表示</span>
<span class="t" style="top:41.45px;font-size:13.5px;height:13.5px;line-height:13.5px;color:#444;left:612.00px;transform:scaleX(0.9611);">開発</span>
<span class="t" style="top:41.95px;font-size:13.5px;height:13.5px;line-height:13.5px;color:#444;left:663.00px;transform:scaleX(1.0049);"><span class="k" style="margin-right:-0.72em">ヘルプ</span></span>
<span class="t" style="top:41.45px;font-size:13.5px;height:13.5px;line-height:13.5px;color:#252423;left:128.00px;font-weight:700;transform:scaleX(1.0835);"><span class="k" style="margin-right:-0.72em">ホーム</span></span>
<span class="t" style="top:41.25px;font-size:13.5px;height:13.5px;line-height:13.5px;color:#185c37;left:1103.00px;font-weight:700;transform:scaleX(0.9342);">共有</span>
<span class="t" style="top:41.25px;font-size:13.5px;height:13.5px;line-height:13.5px;color:#185c37;left:1167.00px;font-weight:700;transform:scaleX(1.0411);"><span class="k" style="margin-right:-0.96em">コメント</span></span>
<span class="t" style="top:103.80px;font-size:12px;height:12px;line-height:12px;color:#3b3a39;left:7.00px;transform:scaleX(0.9208);">貼<span class="k" style="margin-right:-0.24em">り</span>付<span class="k" style="margin-right:-0.24em">け</span></span>
<span class="t" style="top:143.35px;font-size:11.5px;height:11.5px;line-height:11.5px;color:#484644;left:7.00px;transform:scaleX(0.9776);"><span class="k" style="margin-right:-1.68em">クリップボード</span></span>
<span class="t" style="top:142.85px;font-size:11.5px;height:11.5px;line-height:11.5px;color:#484644;left:196.00px;transform:scaleX(0.9642);"><span class="k" style="margin-right:-0.96em">フォント</span></span>
<span class="t" style="top:143.35px;font-size:11.5px;height:11.5px;line-height:11.5px;color:#484644;left:413.80px;transform:scaleX(0.9663);">配置</span>
<span class="t" style="top:143.35px;font-size:11.5px;height:11.5px;line-height:11.5px;color:#484644;left:570.00px;transform:scaleX(1.0000);">数値</span>
<span class="t" style="top:80.00px;font-size:12px;height:12px;line-height:12px;color:#201f1e;left:103.80px;transform:scaleX(0.9295);">游<span class="k" style="margin-right:-0.96em">ゴシック</span></span>
<span class="t" style="top:80.25px;font-size:12.5px;height:12.5px;line-height:12.5px;color:#201f1e;left:263.00px;transform:scaleX(1.0071);">11</span>
<span class="t" style="top:80.00px;font-size:12px;height:12px;line-height:12px;color:#201f1e;left:528.80px;transform:scaleX(0.9254);">標準</span>
<span class="t" style="top:107.55px;font-size:13.5px;height:13.5px;line-height:13.5px;color:#201f1e;left:107.75px;font-weight:700;transform:scaleX(0.7692);">B</span>
<span class="t" style="top:107.80px;font-size:14px;height:14px;line-height:14px;color:#201f1e;left:131.25px;font-style:italic;font-family:Liberation Serif,serif;transform:scaleX(1.1773);">I</span>
<span class="t" style="top:107.45px;font-size:13.5px;height:13.5px;line-height:13.5px;color:#201f1e;left:151.00px;text-decoration:underline;text-underline-offset:2px;transform:scaleX(0.8205);">U</span>
<span class="t" style="top:74.75px;font-size:17.5px;height:17.5px;line-height:17.5px;color:#3b3a39;left:302.25px;transform:scaleX(0.9840);">A</span>
<span class="t" style="top:75.50px;font-size:15px;height:15px;line-height:15px;color:#3b3a39;left:325.25px;transform:scaleX(1.0484);">A</span>
<span class="t" style="top:104.75px;font-size:14.5px;height:14.5px;line-height:14.5px;color:#3b3a39;left:270.25px;transform:scaleX(0.9822);">A</span>
<span class="t" style="top:106.50px;font-size:8px;height:8px;line-height:8px;color:#777;left:311.50px;transform:scaleX(1.2800);"><span class="k" style="margin-right:-0.24em">ア</span></span>
<span class="t" style="top:116.00px;font-size:8px;height:8px;line-height:8px;color:#777;left:312.00px;transform:scaleX(0.9750);">亜</span>
<span class="t" style="top:106.50px;font-size:18px;height:18px;line-height:18px;color:#3b3a39;left:565.00px;transform:scaleX(0.9366);">%</span>
<span class="t" style="top:88.00px;font-size:33px;height:33px;line-height:33px;color:#3b3a39;left:591.50px;font-weight:700;font-family:Liberation Serif,serif;transform:scaleX(0.9212);">,</span>
<span class="t" style="top:103.00px;font-size:12px;height:12px;line-height:12px;color:#3b3a39;left:671.00px;transform:scaleX(0.9727);">条件付<span class="k" style="margin-right:-0.24em">き</span></span>
<span class="t" style="top:117.00px;font-size:12px;height:12px;line-height:12px;color:#3b3a39;left:676.00px;transform:scaleX(0.9496);">書式</span>
<span class="t" style="top:103.00px;font-size:12px;height:12px;line-height:12px;color:#3b3a39;left:719.00px;transform:scaleX(0.9860);"><span class="k" style="margin-right:-1.68em">テーブルとして</span></span>
<span class="t" style="top:117.00px;font-size:12px;height:12px;line-height:12px;color:#3b3a39;left:722.00px;transform:scaleX(0.9164);">書式設定</span>
<span class="t" style="top:103.00px;font-size:12px;height:12px;line-height:12px;color:#3b3a39;left:796.00px;transform:scaleX(1.0211);"><span class="k" style="margin-right:-0.72em">セルの</span></span>
<span class="t" style="top:117.50px;font-size:12px;height:12px;line-height:12px;color:#3b3a39;left:785.00px;transform:scaleX(0.9294);"><span class="k" style="margin-right:-0.96em">スタイル</span></span>
<span class="t" style="top:70.00px;font-size:12px;height:12px;line-height:12px;color:#3b3a39;left:871.80px;transform:scaleX(0.9161);">挿入</span>
<span class="t" style="top:92.00px;font-size:12px;height:12px;line-height:12px;color:#3b3a39;left:870.80px;transform:scaleX(0.9553);">削除</span>
<span class="t" style="top:114.00px;font-size:12px;height:12px;line-height:12px;color:#3b3a39;left:871.80px;transform:scaleX(0.9161);">書式</span>
<span class="t" style="top:103.00px;font-size:12px;height:12px;line-height:12px;color:#3b3a39;left:971.00px;transform:scaleX(0.9705);">並<span class="k" style="margin-right:-0.24em">べ</span>替<span class="k" style="margin-right:-0.48em">えと</span></span>
<span class="t" style="top:117.50px;font-size:12px;height:12px;line-height:12px;color:#3b3a39;left:969.00px;transform:scaleX(0.8966);"><span class="k" style="margin-right:-1.20em">フィルター</span></span>
<span class="t" style="top:103.00px;font-size:12px;height:12px;line-height:12px;color:#3b3a39;left:1028.80px;transform:scaleX(0.9329);">検索<span class="k" style="margin-right:-0.24em">と</span></span>
<span class="t" style="top:117.00px;font-size:12px;height:12px;line-height:12px;color:#3b3a39;left:1027.00px;transform:scaleX(0.9565);">選択</span>
<span class="t" style="top:103.20px;font-size:12px;height:12px;line-height:12px;color:#3b3a39;left:1086.60px;transform:scaleX(1.0844);"><span class="k" style="margin-right:-0.72em">データ</span></span>
<span class="t" style="top:117.00px;font-size:12px;height:12px;line-height:12px;color:#3b3a39;left:1082.80px;transform:scaleX(1.0281);"><span class="k" style="margin-right:-0.24em">の</span>分析</span>
<span class="t" style="top:66.95px;font-size:16.5px;height:16.5px;line-height:16.5px;color:#2b7cd3;left:982.25px;transform:scaleX(0.9350);">A</span>
<span class="t" style="top:81.45px;font-size:15.5px;height:15.5px;line-height:15.5px;color:#3b3a39;left:982.00px;transform:scaleX(1.0561);">Z</span>
<span class="t" style="top:76.55px;font-size:9.5px;height:9.5px;line-height:9.5px;color:#3b3a39;left:479.20px;transform:scaleX(1.0399);">ab</span>
<span class="t" style="top:83.85px;font-size:9.5px;height:9.5px;line-height:9.5px;color:#3b3a39;left:479.20px;transform:scaleX(0.9263);">c</span>
<span class="t" style="top:76.30px;font-size:10px;height:10px;line-height:10px;color:#3b3a39;left:425.50px;transform-origin:50% 50%;rotate:-48deg;">ab</span>
<span class="t" style="top:107.00px;font-size:9px;height:9px;line-height:9px;color:#3b3a39;left:622.75px;transform:scaleX(1.0966);">0</span>
<span class="t" style="top:115.00px;font-size:9px;height:9px;line-height:9px;color:#3b3a39;left:615.00px;transform:scaleX(1.0763);">.00</span>
<span class="t" style="top:107.00px;font-size:9px;height:9px;line-height:9px;color:#3b3a39;left:636.00px;transform:scaleX(1.1960);">.00</span>
<span class="t" style="top:115.00px;font-size:9px;height:9px;line-height:9px;color:#3b3a39;left:645.00px;transform:scaleX(0.7983);">.0</span>
<span class="t" style="top:173.75px;font-size:14.5px;height:14.5px;line-height:14.5px;color:#444;left:7.20px;transform:scaleX(0.9155);">C3</span>
<span class="t" style="top:171.75px;font-size:14.5px;height:14.5px;line-height:14.5px;color:#444;left:251.75px;transform:scaleX(0.8856);">=</span>
<span class="t" style="top:171.00px;font-size:15px;height:15px;line-height:15px;color:#2f8455;left:211.00px;font-style:italic;font-family:Liberation Serif,serif;transform:scaleX(1.0241);">fx</span>
<span class="t" style="top:205.75px;font-size:14.5px;height:14.5px;line-height:14.5px;color:#444;left:28.64px;width:60px;text-align:center;transform-origin:50% 50%;transform:scaleX(.88);">A</span>
<span class="t" style="top:205.75px;font-size:14.5px;height:14.5px;line-height:14.5px;color:#444;left:94.62px;width:60px;text-align:center;transform-origin:50% 50%;transform:scaleX(.88);">B</span>
<span class="t" style="top:205.75px;font-size:14.5px;height:14.5px;line-height:14.5px;color:#444;left:162.60px;width:60px;text-align:center;transform-origin:50% 50%;transform:scaleX(.88);">C</span>
<span class="t" style="top:205.75px;font-size:14.5px;height:14.5px;line-height:14.5px;color:#444;left:229.08px;width:60px;text-align:center;transform-origin:50% 50%;transform:scaleX(.88);">D</span>
<span class="t" style="top:205.75px;font-size:14.5px;height:14.5px;line-height:14.5px;color:#444;left:296.06px;width:60px;text-align:center;transform-origin:50% 50%;transform:scaleX(.88);">E</span>
<span class="t" style="top:205.75px;font-size:14.5px;height:14.5px;line-height:14.5px;color:#444;left:363.54px;width:60px;text-align:center;transform-origin:50% 50%;transform:scaleX(.88);">F</span>
<span class="t" style="top:205.75px;font-size:14.5px;height:14.5px;line-height:14.5px;color:#444;left:431.02px;width:60px;text-align:center;transform-origin:50% 50%;transform:scaleX(.88);">G</span>
<span class="t" style="top:205.75px;font-size:14.5px;height:14.5px;line-height:14.5px;color:#444;left:498.00px;width:60px;text-align:center;transform-origin:50% 50%;transform:scaleX(.88);">H</span>
<span class="t" style="top:205.75px;font-size:14.5px;height:14.5px;line-height:14.5px;color:#444;left:565.48px;width:60px;text-align:center;transform-origin:50% 50%;transform:scaleX(.88);">I</span>
<span class="t" style="top:205.75px;font-size:14.5px;height:14.5px;line-height:14.5px;color:#444;left:633.66px;width:60px;text-align:center;transform-origin:50% 50%;transform:scaleX(.88);">J</span>
<span class="t" style="top:205.75px;font-size:14.5px;height:14.5px;line-height:14.5px;color:#444;left:698.94px;width:60px;text-align:center;transform-origin:50% 50%;transform:scaleX(.88);">K</span>
<span class="t" style="top:205.75px;font-size:14.5px;height:14.5px;line-height:14.5px;color:#444;left:766.92px;width:60px;text-align:center;transform-origin:50% 50%;transform:scaleX(.88);">L</span>
<span class="t" style="top:205.75px;font-size:14.5px;height:14.5px;line-height:14.5px;color:#444;left:832.90px;width:60px;text-align:center;transform-origin:50% 50%;transform:scaleX(.88);">M</span>
<span class="t" style="top:205.75px;font-size:14.5px;height:14.5px;line-height:14.5px;color:#444;left:900.88px;width:60px;text-align:center;transform-origin:50% 50%;transform:scaleX(.88);">N</span>
<span class="t" style="top:205.75px;font-size:14.5px;height:14.5px;line-height:14.5px;color:#444;left:967.36px;width:60px;text-align:center;transform-origin:50% 50%;transform:scaleX(.88);">O</span>
<span class="t" style="top:205.75px;font-size:14.5px;height:14.5px;line-height:14.5px;color:#444;left:1034.34px;width:60px;text-align:center;transform-origin:50% 50%;transform:scaleX(.88);">P</span>
<span class="t" style="top:205.75px;font-size:14.5px;height:14.5px;line-height:14.5px;color:#444;left:1102.32px;width:60px;text-align:center;transform-origin:50% 50%;transform:scaleX(.88);">Q</span>
<span class="t" style="top:205.75px;font-size:14.5px;height:14.5px;line-height:14.5px;color:#444;left:1169.80px;width:60px;text-align:center;transform-origin:50% 50%;transform:scaleX(.88);">R</span>
<span class="t" style="top:228.65px;font-size:14.5px;height:14.5px;line-height:14.5px;color:#444;left:-17.80px;width:60px;text-align:center;transform-origin:50% 50%;transform:scaleX(.9);">1</span>
<span class="t" style="top:251.85px;font-size:14.5px;height:14.5px;line-height:14.5px;color:#444;left:-17.80px;width:60px;text-align:center;transform-origin:50% 50%;transform:scaleX(.9);">2</span>
<span class="t" style="top:275.05px;font-size:14.5px;height:14.5px;line-height:14.5px;color:#444;left:-17.80px;width:60px;text-align:center;transform-origin:50% 50%;transform:scaleX(.9);">3</span>
<span class="t" style="top:298.25px;font-size:14.5px;height:14.5px;line-height:14.5px;color:#444;left:-17.30px;width:60px;text-align:center;transform-origin:50% 50%;transform:scaleX(.9);">4</span>
<span class="t" style="top:321.45px;font-size:14.5px;height:14.5px;line-height:14.5px;color:#444;left:-17.80px;width:60px;text-align:center;transform-origin:50% 50%;transform:scaleX(.9);">5</span>
<span class="t" style="top:344.65px;font-size:14.5px;height:14.5px;line-height:14.5px;color:#444;left:-17.80px;width:60px;text-align:center;transform-origin:50% 50%;transform:scaleX(.9);">6</span>
<span class="t" style="top:367.85px;font-size:14.5px;height:14.5px;line-height:14.5px;color:#444;left:-17.80px;width:60px;text-align:center;transform-origin:50% 50%;transform:scaleX(.9);">7</span>
<span class="t" style="top:391.05px;font-size:14.5px;height:14.5px;line-height:14.5px;color:#444;left:-17.80px;width:60px;text-align:center;transform-origin:50% 50%;transform:scaleX(.9);">8</span>
<span class="t" style="top:414.25px;font-size:14.5px;height:14.5px;line-height:14.5px;color:#444;left:-17.80px;width:60px;text-align:center;transform-origin:50% 50%;transform:scaleX(.9);">9</span>
<span class="t" style="top:437.45px;font-size:14.5px;height:14.5px;line-height:14.5px;color:#444;left:-17.80px;width:60px;text-align:center;transform-origin:50% 50%;transform:scaleX(.9);">10</span>
<span class="t" style="top:460.65px;font-size:14.5px;height:14.5px;line-height:14.5px;color:#444;left:-17.80px;width:60px;text-align:center;transform-origin:50% 50%;transform:scaleX(.9);">11</span>
<span class="t" style="top:483.85px;font-size:14.5px;height:14.5px;line-height:14.5px;color:#444;left:-17.80px;width:60px;text-align:center;transform-origin:50% 50%;transform:scaleX(.9);">12</span>
<span class="t" style="top:507.05px;font-size:14.5px;height:14.5px;line-height:14.5px;color:#444;left:-17.80px;width:60px;text-align:center;transform-origin:50% 50%;transform:scaleX(.9);">13</span>
<span class="t" style="top:530.25px;font-size:14.5px;height:14.5px;line-height:14.5px;color:#444;left:-17.80px;width:60px;text-align:center;transform-origin:50% 50%;transform:scaleX(.9);">14</span>
<span class="t" style="top:553.45px;font-size:14.5px;height:14.5px;line-height:14.5px;color:#444;left:-17.80px;width:60px;text-align:center;transform-origin:50% 50%;transform:scaleX(.9);">15</span>
<span class="t" style="top:251.80px;font-size:14px;height:14px;line-height:14px;color:#3a3a3a;left:95.20px;transform:scaleX(0.9706);">得点</span>
<span class="t" style="top:251.80px;font-size:14px;height:14px;line-height:14px;color:#3a3a3a;left:162.00px;transform:scaleX(0.9977);">判定</span>
<span class="t" style="top:275.75px;font-size:14.5px;height:14.5px;line-height:14.5px;color:#333;left:133.00px;transform:scaleX(0.9899);">100</span>
<span class="t" style="top:298.55px;font-size:14.5px;height:14.5px;line-height:14.5px;color:#333;left:141.00px;transform:scaleX(0.9293);">70</span>
<span class="t" style="top:322.35px;font-size:14.5px;height:14.5px;line-height:14.5px;color:#333;left:141.00px;transform:scaleX(0.9293);">68</span>
<span class="t" style="top:345.15px;font-size:14.5px;height:14.5px;line-height:14.5px;color:#333;left:141.00px;transform:scaleX(0.9293);">82</span>
<span class="t" style="top:367.95px;font-size:14.5px;height:14.5px;line-height:14.5px;color:#333;left:141.00px;transform:scaleX(0.9293);">90</span>
<span class="t" style="top:275.95px;font-size:14.5px;height:14.5px;line-height:14.5px;color:#333;left:163.00px;transform:scaleX(0.9919);">=</span>
<div class="a" style="left:1210.0px;top:201.5px;width:18.0px;height:361.0px;background:#e6e6e6;"></div>
<div class="a" style="left:1211.0px;top:203.0px;width:16.2px;height:15.0px;background:#fff;border:1px solid #cfcfcf;"></div>
<div class="a" style="left:1211.0px;top:218.0px;width:16.2px;height:230.0px;background:#fff;border:1px solid #cfcfcf;border-top:none"></div>
<div class="a" style="left:1211.0px;top:448.0px;width:16.2px;height:99.0px;background:#d6d6d6;"></div>
<div class="a" style="left:1211.0px;top:547.0px;width:16.2px;height:15.0px;background:#fff;border:1px solid #cfcfcf;"></div>
<svg class="a" style="left:0;top:0" width="1228" height="604"><polygon points="1215,212.5 1222,212.5 1218.5,208.5" fill="#666"/><polygon points="1215,552.5 1222,552.5 1218.5,556.5" fill="#666"/></svg>
<div class="a" style="left:0.0px;top:562.0px;width:1228.0px;height:21.0px;background:#e6e6e6;border-top:1px solid #b4b4b4;"></div>
<div class="a" style="left:68.0px;top:562.0px;width:29.3px;height:18.0px;background:#fff;border-bottom:2px solid #217346;"></div>
<div class="a" style="left:745.3px;top:564.6px;width:15.7px;height:15.0px;background:#fff;border:1px solid #cfcfcf;"></div>
<div class="a" style="left:761.0px;top:564.6px;width:407.0px;height:15.0px;background:#fff;border:1px solid #cfcfcf;border-left:none"></div>
<div class="a" style="left:1168.0px;top:564.6px;width:26.5px;height:15.0px;background:#d3d3d3;"></div>
<div class="a" style="left:1194.5px;top:564.6px;width:15.5px;height:15.0px;background:#fff;border:1px solid #cfcfcf;"></div>
<svg class="a" style="left:0;top:0" width="1228" height="604"><polygon points="755.5,568.5 755.5,575.5 751.5,572" fill="#555"/><polygon points="1200.5,568.5 1200.5,575.5 1204.5,572" fill="#555"/><circle cx="734" cy="567.5" r="0.9" fill="#999"/><circle cx="734" cy="572" r="0.9" fill="#999"/><circle cx="734" cy="576.5" r="0.9" fill="#999"/></svg>
<div class="a" style="left:0.0px;top:582.6px;width:1228.0px;height:17.4px;background:#f3f2f1;"></div>
<div class="a" style="left:0.0px;top:600.0px;width:1228.0px;height:4.0px;background:#fff;"></div>
<svg style="left:0;top:0" width="1228" height="604" viewBox="0 0 1228 604">
<polygon points="20,568.5 20,574.5 16,571.5" fill="#c8c6c4"/><polygon points="35.5,568.5 35.5,574.5 39.5,571.5" fill="#c8c6c4"/>
<circle cx="127" cy="571.8" r="6.7" fill="none" stroke="#605e5c" stroke-width="1"/><path d="M123.5,571.8 H130.5 M127,568.3 V575.3" stroke="#605e5c" stroke-width="1" fill="none"/>
<path d="M69,598.5 V588 H81.5 V590.5 M69,590.5 H81.5" fill="none" stroke="#444" stroke-width="1.1"/><line x1="71" y1="593" x2="74" y2="593" stroke="#444"/><line x1="71" y1="595.5" x2="73" y2="595.5" stroke="#444"/><circle cx="78.7" cy="595.7" r="3.7" fill="none" stroke="#444" stroke-width="1.1"/><circle cx="78.7" cy="595.7" r="1.5" fill="#444"/>
<rect x="936" y="586.5" width="12" height="11" fill="none" stroke="#979593" stroke-width="1"/><path d="M940,586.5 V597.5 M944,586.5 V597.5 M936,590.2 H948 M936,593.8 H948" stroke="#979593" stroke-width="1" fill="none"/>
<rect x="975" y="586.5" width="13" height="11.5" fill="none" stroke="#979593" stroke-width="1"/><rect x="978" y="589" width="7" height="7" fill="none" stroke="#979593" stroke-width="1"/><path d="M979.5,591 H983.5 M979.5,593 H983.5" stroke="#979593" stroke-width=".8"/>
<rect x="1014" y="586.5" width="12.5" height="11" fill="none" stroke="#979593" stroke-width="1"/><path d="M1018,586.5 V592 H1022.5 V586.5" fill="none" stroke="#979593" stroke-width="1"/>
<line x1="1045" y1="592.5" x2="1051" y2="592.5" stroke="#979593"/><line x1="1057.5" y1="592.5" x2="1152.5" y2="592.5" stroke="#979593"/><line x1="1105" y1="589" x2="1105" y2="596" stroke="#979593"/>
<path d="M1158.5,592.5 H1165.5 M1162,589 V596" stroke="#979593" fill="none"/>
</svg>
<span class="t" style="top:564.00px;font-size:14px;height:14px;line-height:14px;color:#2c7d52;left:76.60px;font-family:Liberation Serif,serif;transform:scaleX(0.9134);">IF</span>
<span class="t" style="top:588.00px;font-size:12px;height:12px;line-height:12px;color:#444;left:4.60px;transform:scaleX(0.9161);">編集</span>
<span class="t" style="top:588.25px;font-size:12.5px;height:12.5px;line-height:12.5px;color:#a6a6a6;left:1177.40px;transform:scaleX(1.0486);">100%</span>
<div class="a" style="left:662.0px;top:139.0px;width:461.0px;height:409.0px;background:#f0f0f0;box-shadow:0 1px 5px 0 rgba(0,0,0,.5);border:1px solid #b9b9b9;"></div>
<div class="a" style="left:663.0px;top:140.0px;width:459.0px;height:27.3px;background:#fff;"></div>
<div class="a" style="left:679.0px;top:198.5px;width:341.5px;height:34.0px;background:#fff;border:1px solid #c4c4c4;"></div>
<div class="a" style="left:1030.5px;top:198.5px;width:84.0px;height:25.0px;background:#e1e1e1;border:1px solid #b4b4b4;"></div>
<div class="a" style="left:761.0px;top:237.0px;width:259.5px;height:23.0px;background:#fff;border:1px solid #c4c4c4;"></div>
<div class="a" style="left:1002.5px;top:238.0px;width:17.0px;height:21.0px;background:#e5e5e5;border:1px solid #c8c8c8;"></div>
<div class="a" style="left:679.0px;top:293.0px;width:436.0px;height:106.5px;background:#fff;border:1px solid #9c9c9c;"></div>
<div class="a" style="left:1097.0px;top:294.0px;width:17.0px;height:104.5px;background:#f0f0f0;"></div>
<div class="a" style="left:1098.0px;top:333.0px;width:15.0px;height:16.5px;background:#cdcdcd;"></div>
<div class="a" style="left:680.0px;top:383.5px;width:417.0px;height:14.5px;background:#0078d7;"></div>
<div class="a" style="left:670.5px;top:381.0px;width:75.0px;height:23.5px;border:3px solid #d8202c;"></div>
<div class="a" style="left:669.5px;top:500.0px;width:445.0px;height:1.0px;background:#dfdfdf;"></div>
<div class="a" style="left:944.0px;top:514.0px;width:79.5px;height:25.0px;background:#e1e1e1;border:2px solid #0078d7;"></div>
<div class="a" style="left:1034.0px;top:514.0px;width:80.5px;height:25.0px;background:#e1e1e1;border:1px solid #b4b4b4;"></div>
<svg style="left:0;top:0" width="1228" height="604" viewBox="0 0 1228 604">
<path d="M1094,148.5 L1104.3,159 M1104.3,148.5 L1094,159" stroke="#a6a6a6" stroke-width="1" fill="none"/>
<polyline points="1007.8,247.4 1011.0,250.6 1014.2,247.4" fill="none" stroke="#444" stroke-width="1.1"/>
<polyline points="1102,306 1105.7,302.3 1109.4,306" fill="none" stroke="#444" stroke-width="1.5"/>
<polyline points="1102,388.7 1105.7,392.4 1109.4,388.7" fill="none" stroke="#444" stroke-width="1.5"/>
</svg>
<span class="t" style="top:149.20px;font-size:12px;height:12px;line-height:12px;color:#9a9a9a;left:669.60px;transform:scaleX(0.9880);">関数<span class="k" style="margin-right:-0.24em">の</span>挿入</span>
<span class="t" style="top:146.50px;font-size:14px;height:14px;line-height:14px;color:#a6a6a6;left:1050.75px;transform:scaleX(0.7311);">?</span>
<span class="t" style="top:178.00px;font-size:12px;height:12px;line-height:12px;color:#000;left:668.80px;transform:scaleX(1.0075);">関数<span class="k" style="margin-right:-0.24em">の</span>検索(<u>S</u>):</span>
<span class="t" style="top:203.20px;font-size:12px;height:12px;line-height:12px;color:#000;left:682.60px;transform:scaleX(0.9546);">何<span class="k" style="margin-right:-1.44em">がしたいかを</span>簡単<span class="k" style="margin-right:-0.24em">に</span>入力<span class="k" style="margin-right:-0.48em">して</span>、[検索開始] <span class="k" style="margin-right:-2.64em">をクリックしてください</span>。</span>
<span class="t" style="top:205.40px;font-size:12px;height:12px;line-height:12px;color:#000;left:1040.20px;transform:scaleX(1.0030);">検索開始(<u>G</u>)</span>
<span class="t" style="top:244.20px;font-size:12px;height:12px;line-height:12px;color:#000;left:678.60px;transform:scaleX(1.0270);">関数<span class="k" style="margin-right:-0.24em">の</span>分類(<u>C</u>):</span>
<span class="t" style="top:245.20px;font-size:12px;height:12px;line-height:12px;color:#000;left:764.00px;transform:scaleX(1.0516);"><span class="k" style="margin-right:-0.72em">すべて</span>表示</span>
<span class="t" style="top:272.80px;font-size:12px;height:12px;line-height:12px;color:#000;left:668.80px;transform:scaleX(1.0540);">関数名(<u>N</u>):</span>
<span class="t" style="top:297.10px;font-size:12px;height:12px;line-height:12px;color:#000;left:681.60px;transform:scaleX(0.9550);">HEX2OCT</span>
<span class="t" style="top:312.10px;font-size:12px;height:12px;line-height:12px;color:#000;left:681.60px;transform:scaleX(0.9759);">HLOOKUP</span>
<span class="t" style="top:326.90px;font-size:12px;height:12px;line-height:12px;color:#000;left:681.60px;transform:scaleX(0.9817);">HOUR</span>
<span class="t" style="top:341.70px;font-size:12px;height:12px;line-height:12px;color:#000;left:681.60px;transform:scaleX(0.9593);">HYPERLINK</span>
<span class="t" style="top:355.50px;font-size:12px;height:12px;line-height:12px;color:#000;left:681.60px;transform:scaleX(0.9554);">HYPGEOM.DIST</span>
<span class="t" style="top:370.30px;font-size:12px;height:12px;line-height:12px;color:#000;left:681.60px;transform:scaleX(0.9480);">HYPGEOMDIST</span>
<span class="t" style="top:385.30px;font-size:12px;height:12px;line-height:12px;color:#fff;left:681.60px;transform:scaleX(1.1340);">IF</span>
<span class="t" style="top:405.80px;font-size:12px;height:12px;line-height:12px;color:#000;left:678.20px;transform:scaleX(1.0091);">IF(論理式,値<span class="k" style="margin-right:-0.24em">が</span>真<span class="k" style="margin-right:-0.24em">の</span>場合,値<span class="k" style="margin-right:-0.24em">が</span>偽<span class="k" style="margin-right:-0.24em">の</span>場合)</span>
<span class="t" style="top:424.80px;font-size:12px;height:12px;line-height:12px;color:#000;left:679.20px;transform:scaleX(0.9803);">論理式<span class="k" style="margin-right:-0.24em">の</span>結果 (真<span class="k" style="margin-right:-0.72em">または</span>偽) <span class="k" style="margin-right:-0.24em">に</span>応<span class="k" style="margin-right:-0.48em">じて</span>、指定<span class="k" style="margin-right:-0.72em">された</span>値<span class="k" style="margin-right:-0.24em">を</span>返<span class="k" style="margin-right:-0.72em">します</span></span>
<span class="t" style="top:518.10px;font-size:12px;height:12px;line-height:12px;color:#2a6ebb;left:669.00px;border-bottom:1px solid #2a6ebb;transform:scaleX(1.0028);"><span class="k" style="margin-right:-0.48em">この</span>関数<span class="k" style="margin-right:-0.96em">のヘルプ</span></span>
<span class="t" style="top:522.25px;font-size:12.5px;height:12.5px;line-height:12.5px;color:#000;left:975.40px;transform:scaleX(0.9618);">OK</span>
<span class="t" style="top:521.50px;font-size:12px;height:12px;line-height:12px;color:#000;left:1050.80px;transform:scaleX(1.0145);"><span class="k" style="margin-right:-1.20em">キャンセル</span></span>
</body></html>
